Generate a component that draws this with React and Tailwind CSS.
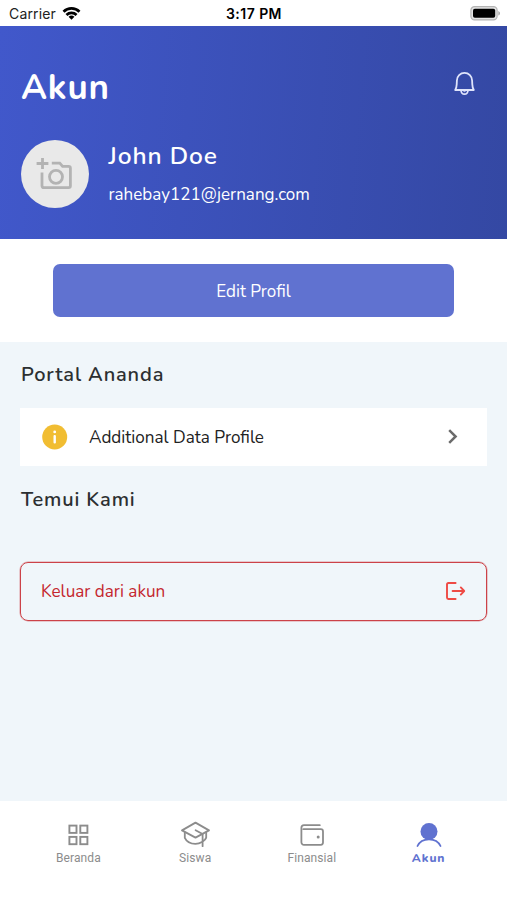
const WifiIcon = () => (
    <svg width="19" height="15" viewBox="0 0 20 15" fill="none" stroke="#000" strokeWidth="2.9">
        <path d="M1.6 5.6a12 12 0 0 1 16.8 0" />
        <path d="M4.7 9a7.6 7.6 0 0 1 10.6 0" />
        <path d="M10 14.2 6.9 11a4.5 4.5 0 0 1 6.2 0z" fill="#000" stroke="none" />
    </svg>
);

const BatteryIcon = () => (
    <svg width="31" height="15" viewBox="0 0 31 15">
        <rect x="0.9" y="0.7" width="26.2" height="13.2" rx="3.6" fill="#e4e4e4" stroke="#b4b4b4" strokeWidth="1.2" />
        <rect x="3" y="2.8" width="22.2" height="9" rx="1.8" fill="#000" />
        <path d="M28.3 5v4.6c1-.4 1.7-1.3 1.7-2.3s-.7-1.9-1.7-2.3z" fill="#aaa" />
    </svg>
);

const BellIcon = () => (
    <svg width="21" height="25" viewBox="0 0 21 25" fill="none" stroke="#dfe4fb" strokeWidth="1.8" strokeLinecap="round" strokeLinejoin="round">
        <path d="M1.2 19c1-1.5 1.4-3.3 1.5-5.6l.2-3.9a7.6 7.6 0 0 1 15.2 0l.2 3.9c.1 2.3.5 4.1 1.5 5.6z" />
        <path d="M7 19.2c.2 2.6 1.6 4 3.5 4s3.300-1.400 3.500-4" />
        <path d="M9.2 19.400c.2.9.6 1.200 1.300 1.200s1.100-.3 1.300-1.200" strokeWidth="1" />
    </svg>
);

const CameraIcon = () => (
    <svg width="36" height="33" viewBox="0 0 36 33" fill="none" stroke="#b3b3b3" strokeWidth="2.8">
        <path d="M6.5 1v11M.6 6.5h11.8" />
        <path d="M15.8 6.2h8l2.8 3.2h6q1.8 0 1.8 1.8v17.6q0 1.8-1.8 1.8H7.8Q6 30.6 6 28.8V15.4" />
        <circle cx="20" cy="19.8" r="6.5" />
    </svg>
);

const InfoIcon = () => (
    <svg width="26" height="26" viewBox="0 0 26 26">
        <circle cx="12.7" cy="13" r="12.5" fill="#f1bd32" />
        <circle cx="12.7" cy="7.9" r="1.4" fill="#fff" />
        <rect x="11.5" y="11" width="2.4" height="8.4" rx="1" fill="#fff" />
    </svg>
);

const ChevronIcon = () => (
    <svg width="10" height="15" viewBox="0 0 10 15" fill="none" stroke="#6b6b6b" strokeWidth="2.5">
        <path d="M1.2 1.2 7.6 7.5l-6.4 6.3" />
    </svg>
);

const LogoutIcon = () => (
    <svg width="20" height="18" viewBox="0 0 20 18" fill="none" stroke="#ee4a44" strokeWidth="1.9" strokeLinecap="round" strokeLinejoin="round">
        <path d="M9.6 1H2.4Q1 1 1 2.4v13.2Q1 17 2.4 17h7.2" />
        <path d="M6.6 9h11.4M14.8 5.4 18.2 9l-3.4 3.6" />
    </svg>
);

const GridIcon = () => (
    <svg width="22" height="22" viewBox="0 0 22 22" fill="none" stroke="#8c8c8c" strokeWidth="1.9">
        <rect x="2.4" y="1.6" width="7.1" height="7.3" />
        <rect x="13.3" y="1.6" width="7.1" height="7.3" />
        <rect x="2.4" y="12.9" width="7.1" height="7.3" />
        <rect x="13.3" y="12.9" width="7.1" height="7.3" />
    </svg>
);

const GraduationIcon = () => (
    <svg width="30" height="27" viewBox="0 0 30 27" fill="none" stroke="#8c8c8c" strokeWidth="1.8" strokeLinecap="round" strokeLinejoin="round">
        <path d="M15.5 1.6 29 9.4l-13.5 7.2L2 9.4z" />
        <path d="M4.8 11.4v5.4c1.8 3.8 6 6 10.6 6 2.5 0 4.8-.7 6.6-1.8" />
        <path d="M15.6 9.2l7 3.8v12.2M26.2 11.4v5.2c-.6 1.6-1.8 3-3.4 4" />
    </svg>
);

const WalletIcon = () => (
    <svg width="24" height="22" viewBox="0 0 24 22" fill="none" stroke="#8c8c8c" strokeWidth="1.8" strokeLinecap="round" strokeLinejoin="round">
        <path d="M19.8 1.2H4A2.6 2.6 0 0 0 1.4 3.8v14.4A2.6 2.6 0 0 0 4 20.8h16.8a2.2 2.2 0 0 0 2.2-2.2V7.4a2.2 2.2 0 0 0-2.2-2.2H3.4" />
        <circle cx="18.2" cy="13" r="1.5" fill="#8c8c8c" stroke="none" />
    </svg>
);

const UserIcon = () => (
    <svg width="26" height="26" viewBox="0 0 26 26">
        <circle cx="13" cy="9.4" r="8.5" fill="#6072d0" />
        <path d="M1.5 24C3.5 19.6 8 17.3 13 17.3s9.5 2.3 11.5 6.7" fill="none" stroke="#6072d0" strokeWidth="1.8" strokeLinecap="round" />
    </svg>
);

const tabs = [
    { label: 'Beranda', icon: <GridIcon /> },
    { label: 'Siswa', icon: <GraduationIcon /> },
    { label: 'Finansial', icon: <WalletIcon /> },
    { label: 'Akun', icon: <UserIcon />, active: true }
];

const StatusBar = () => (
    <div className="grid h-[25.5px] grid-cols-3 items-center bg-white pr-[6px] pl-[9px] font-['Inter',sans-serif] text-black">
        <div className="flex items-center gap-[6px] pt-px text-[14px] tracking-[0.15px] text-[#222]">
            <span>Carrier</span>
            <WifiIcon />
        </div>
        <span className="pt-px pr-[2px] text-center text-[14px] font-semibold tracking-[0.45px] whitespace-nowrap">3:17 PM</span>
        <div className="flex justify-end pt-px">
            <BatteryIcon />
        </div>
    </div>
);

const App = () => {
    return (
        <div className="flex h-[900px] w-[507px] flex-col overflow-hidden bg-white font-['Nunito','Lato',sans-serif]">
            <StatusBar />

            <header className="h-[213.5px] bg-linear-95 from-[#4158cb] to-[#3448a3] px-[21px] text-white">
                <div className="flex items-center justify-between pt-[38px] pr-[11px]">
                    <h1 className="text-[35px] leading-[48px] font-bold tracking-[0.8px]">Akun</h1>
                    <div className="-mt-[9px]">
                        <BellIcon />
                    </div>
                </div>
                <div className="mt-[28.5px] flex gap-5">
                    <div className="flex size-[68px] shrink-0 items-center justify-center rounded-full bg-[#e9e9e9] pr-[2px] pb-[1px]">
                        <CameraIcon />
                    </div>
                    <div className="-ml-[0.5px]">
                        <p className="text-[24.5px] leading-[32px] font-semibold tracking-[0.9px]">John Doe</p>
                        <p className="mt-[10.5px] text-[17px] leading-[24px] tracking-[0.03px]">rahebay121@jernang.com</p>
                    </div>
                </div>
            </header>

            <div className="px-[53px] pt-[24.5px] pb-[25px]">
                <button className="h-[53.5px] w-full rounded-[7px] bg-[#6072d0] pt-[2px] text-[17px] text-white">Edit Profil</button>
            </div>

            <main className="flex-1 bg-[#f0f6fa] px-5">
                <h2 className="pt-[21px] pl-px text-[20px] leading-[24px] font-semibold tracking-[0.85px] text-[#2c2f31]">Portal Ananda</h2>
                <div className="mt-[20.5px] flex h-[58.5px] items-center bg-white pr-[29px] pl-[22px]">
                    <InfoIcon />
                    <span className="ml-[21px] flex-1 pt-[3px] text-[17.1px] text-[#222]">Additional Data Profile</span>
                    <ChevronIcon />
                </div>
                <h2 className="mt-[21.5px] pl-px text-[20px] leading-[24px] font-semibold tracking-[0.85px] text-[#2c2f31]">Temui Kami</h2>
                <button className="mt-[50px] flex h-[59px] w-full items-center justify-between rounded-[8px] border-[1.5px] border-[#cc4248] px-[20px] text-[17.1px] text-[#c4262e] ring-[0.5px] ring-[#cc4248]/50">
                    <span className="pt-[2px]">Keluar dari akun</span>
                    <LogoutIcon />
                </button>
            </main>

            <nav className="grid h-[99px] grid-cols-4 bg-white px-5 pt-[19.5px]">
                {tabs.map((tab) => (
                    <div key={tab.label} className="flex flex-col items-center">
                        <div className="flex h-[28px] items-center">{tab.icon}</div>
                        <span
                            className={
                                tab.active
                                    ? 'text-[12px] leading-[19px] font-extrabold tracking-[0.9px] text-[#6072d0]'
                                    : "font-['Roboto',sans-serif] text-[12px] leading-[19px] tracking-[0.1px] text-[#8c8c8c]"
                            }
                        >
                            {tab.label}
                        </span>
                    </div>
                ))}
            </nav>
        </div>
    );
};

export default App;
